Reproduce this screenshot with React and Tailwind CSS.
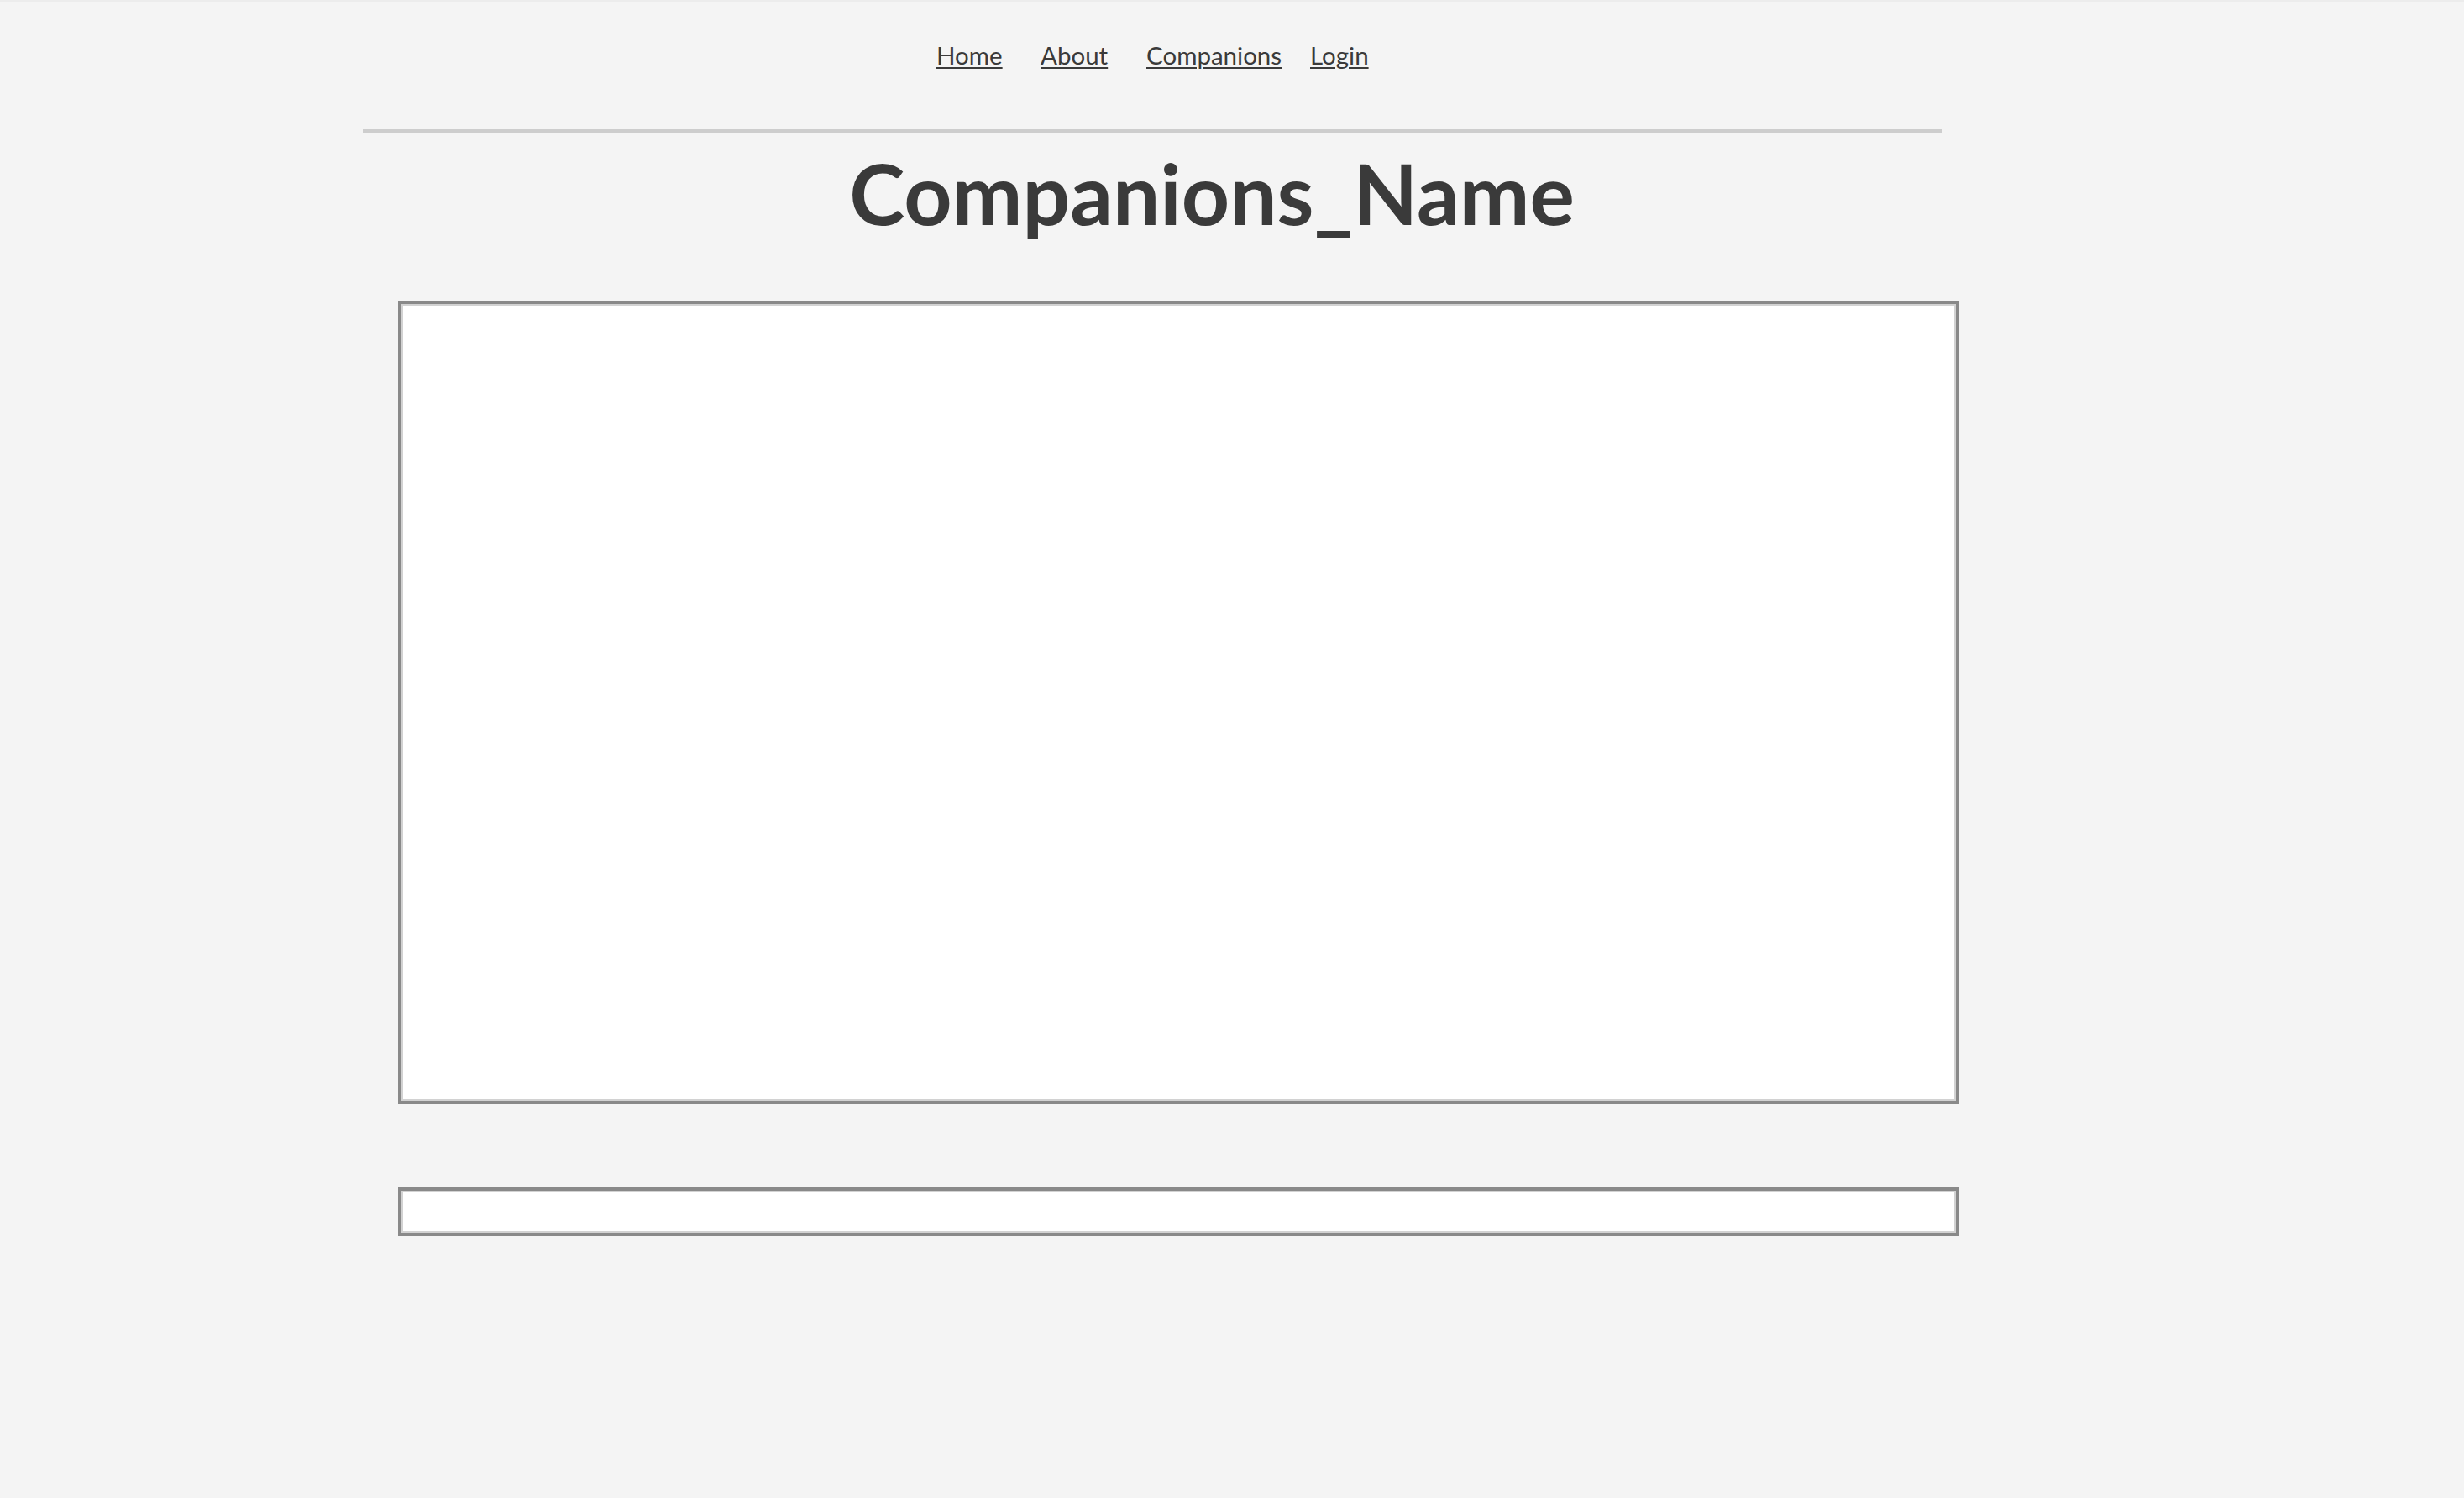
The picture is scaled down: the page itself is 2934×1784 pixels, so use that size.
export default function App() {
  const font = { fontFamily: 'Lato, "Open Sans", sans-serif' };
  return (
    <div className="min-h-[1784px] w-full bg-[#f4f4f4] border-t-2 border-[#ececec] text-[#3a3a3a]" style={font}>
      <nav className="flex pl-[1115px] pt-[49px] h-[152px]">
        <a href="#" className="w-[124px] text-[29.5px] leading-[29px] underline underline-offset-[3px] decoration-2">Home</a>
        <a href="#" className="w-[126px] text-[29.5px] leading-[29px] underline underline-offset-[3px] decoration-2">About</a>
        <a href="#" className="w-[195px] text-[29.5px] leading-[29px] underline underline-offset-[3px] decoration-2">Companions</a>
        <a href="#" className="text-[29.5px] leading-[29px] underline underline-offset-[3px] decoration-2">Login</a>
      </nav>
      <div className="ml-[432px] w-[1880px] h-[4px] bg-[#cdcdcd]" />
      <h1 className="pr-[48px] pt-[21px] text-center text-[100px] leading-[100px] font-bold text-[#3a3a3a]">Companions_Name</h1>
      <div className="ml-[474px] mt-[79px] w-[1859px] h-[957px] border-4 border-[#898989] bg-white shadow-[inset_0_0_0_2px_#d2d2d2]" />
      <div className="ml-[474px] mt-[99px] w-[1859px] h-[58px] border-4 border-[#898989] bg-white shadow-[inset_0_0_0_2px_#d2d2d2]" />
    </div>
  );
}
